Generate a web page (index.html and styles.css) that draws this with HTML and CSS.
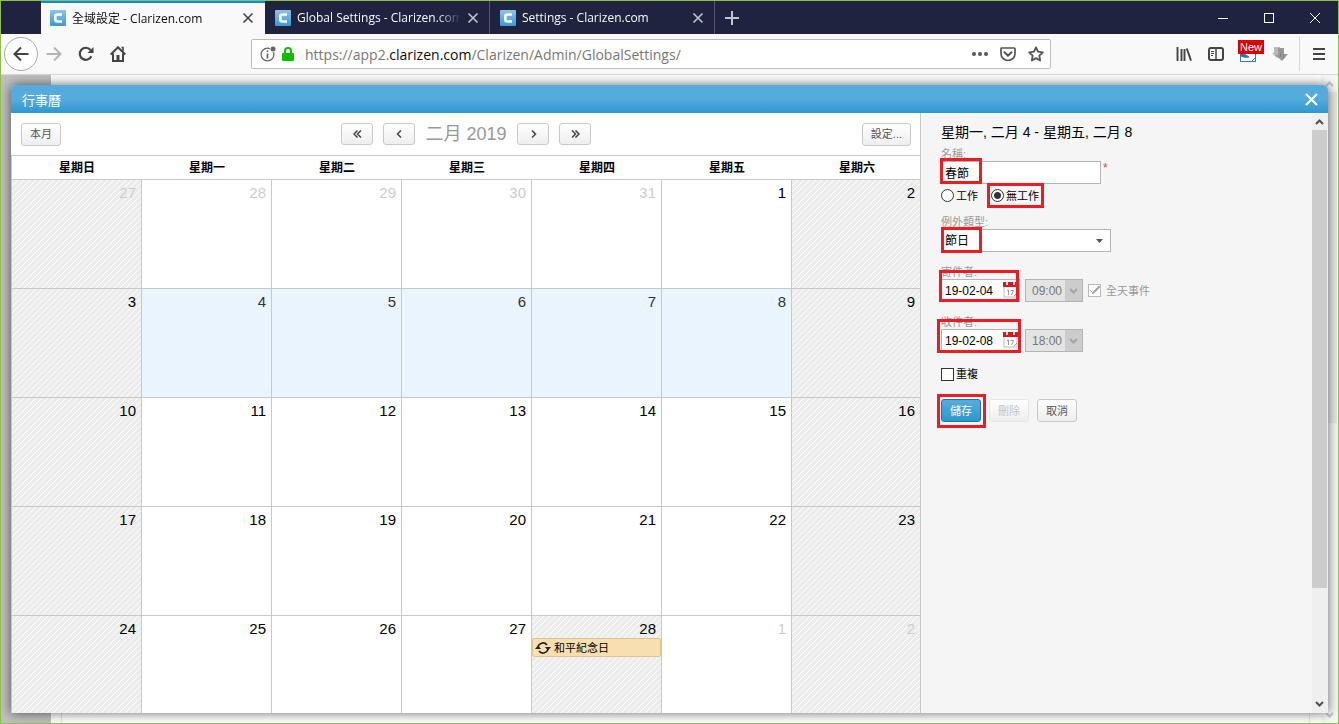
FILE: index.html
```
<!DOCTYPE html>
<html lang="zh-Hant">
<head>
    <meta charset="UTF-8">
    <meta name="viewport" content="width=device-width, initial-scale=1.0">
    <title>全域設定 - Clarizen.com</title>
    <link rel="stylesheet" href="styles.css">
</head>
<body>

<svg width="0" height="0" class="defs" aria-hidden="true">
    <linearGradient id="logo-bg" x1="0" y1="0" x2="0" y2="1">
        <stop offset="0" stop-color="#8cc3e8"/>
        <stop offset="1" stop-color="#3a9bd4"/>
    </linearGradient>
    <symbol id="logo" viewBox="0 0 16 16">
        <rect width="16" height="16" rx="1" fill="url(#logo-bg)"/>
        <path d="M12 4.500H7.500Q5.300 4.500 5.300 6.500V9.500Q5.300 11.500 7.500 11.500H12" fill="none" stroke="#fff" stroke-width="2.600"/>
    </symbol>
    <symbol id="cross" viewBox="0 0 12 12">
        <path d="M1.500 1.500l9 9M10.500 1.500l-9 9" fill="none" stroke="currentColor" stroke-width="1.600"/>
    </symbol>
    <symbol id="chev-up" viewBox="0 0 9 6">
        <path d="M1 5l3.500-3.500L8 5" fill="none" stroke="currentColor" stroke-width="2"/>
    </symbol>
    <symbol id="chev-down" viewBox="0 0 9 6">
        <path d="M1 1l3.500 3.500L8 1" fill="none" stroke="currentColor" stroke-width="2"/>
    </symbol>
    <symbol id="datepick" viewBox="0 0 15 16">
        <rect x="1" y="4" width="13" height="11" fill="#fff" stroke="#bbb"/>
        <path d="M0 0h15v5H0z" fill="#d01c1f"/>
        <path d="M3 0h2v3H3zM10 0h2v3h-2z" fill="#f3d6d6"/>
        <path d="M4 8.500l1.500-.5v5M7.500 8.500h3l-2 4.500M11 14l3-3" fill="none" stroke="#999"/>
    </symbol>
</svg>

<div class="window">
    <header class="tabbar">
        <div class="tab active">
            <svg class="favicon"><use href="#logo"/></svg>
            <span class="tab-title">全域設定 - Clarizen.com</span>
            <button type="button" class="tab-close" aria-label="Close tab"><svg><use href="#cross"/></svg></button>
        </div>
        <div class="tab">
            <svg class="favicon"><use href="#logo"/></svg>
            <span class="tab-title">Global Settings - Clarizen.com</span>
            <button type="button" class="tab-close" aria-label="Close tab"><svg><use href="#cross"/></svg></button>
        </div>
        <div class="tab">
            <svg class="favicon"><use href="#logo"/></svg>
            <span class="tab-title">Settings - Clarizen.com</span>
            <button type="button" class="tab-close" aria-label="Close tab"><svg><use href="#cross"/></svg></button>
        </div>
        <button type="button" class="tab-new" aria-label="New tab">
            <svg width="14" height="14" viewBox="0 0 14 14"><path d="M7 0v14M0 7h14" stroke="currentColor" stroke-width="2"/></svg>
        </button>
        <div class="window-buttons">
            <button type="button" aria-label="Minimize"><svg width="10" height="10" viewBox="0 0 10 10"><path d="M0 5.500h10" stroke="#fff"/></svg></button>
            <button type="button" aria-label="Maximize"><svg width="10" height="10" viewBox="0 0 10 10"><rect x=".5" y=".5" width="9" height="9" fill="none" stroke="#fff"/></svg></button>
            <button type="button" aria-label="Close"><svg width="10" height="10" viewBox="0 0 10 10"><path d="M0 0l10 10M10 0L0 10" stroke="#fff"/></svg></button>
        </div>
    </header>

    <nav class="navbar">
        <button type="button" class="nav-back" aria-label="Back">
            <svg width="16" height="16" viewBox="0 0 16 16"><path d="M15.500 8H2M8 1.500L1.500 8 8 14.500" fill="none" stroke="#444" stroke-width="2"/></svg>
        </button>
        <button type="button" class="nav-icon" aria-label="Forward">
            <svg width="16" height="16" viewBox="0 0 16 16"><path d="M.5 8H14M8 1.500L14.500 8 8 14.500" fill="none" stroke="#b4b4b5" stroke-width="2"/></svg>
        </button>
        <button type="button" class="nav-icon" aria-label="Reload">
            <svg width="16" height="16" viewBox="0 0 16 16"><path d="M13.300 10.200A6 6 0 1 1 12.500 4" fill="none" stroke="#444" stroke-width="2.200"/><path d="M15.500 1v6h-6z" fill="#444"/></svg>
        </button>
        <button type="button" class="nav-icon" aria-label="Home">
            <svg width="16" height="16" viewBox="0 0 16 16"><path d="M.7 8.500L8 1.300l7.300 7.200M3 7.500V15h10V7.500" fill="none" stroke="#444" stroke-width="2"/><path d="M6.500 9h3v6h-3z" fill="#444"/><path d="M11.500 1.500H13V5" fill="none" stroke="#444" stroke-width="1.500"/></svg>
        </button>

        <div class="urlbar">
            <svg width="16" height="16" viewBox="0 0 16 16"><circle cx="7.500" cy="8.500" r="6.400" fill="none" stroke="#666" stroke-width="1.300"/><path d="M7.500 7.500v5M7.500 4.500v1.600" stroke="#666" stroke-width="1.700"/><circle cx="13" cy="3" r="3.200" fill="#fff"/><circle cx="13" cy="3" r="2.500" fill="#666"/></svg>
            <svg width="12" height="14" viewBox="0 0 12 14"><path d="M3 7V4a3 3 0 0 1 6 0v3" fill="none" stroke="#12bc00" stroke-width="2"/><rect y="6" width="12" height="8" rx="1" fill="#12bc00"/></svg>
            <div class="url">https://app2.<b>clarizen.com</b>/Clarizen/Admin/GlobalSettings/</div>
            <button type="button" class="url-icon" aria-label="Page actions">
                <svg width="16" height="16" viewBox="0 0 16 16"><g fill="#555"><circle cx="2" cy="8" r="2"/><circle cx="8" cy="8" r="2"/><circle cx="14" cy="8" r="2"/></g></svg>
            </button>
            <button type="button" class="url-icon" aria-label="Save to Pocket">
                <svg width="16" height="16" viewBox="0 0 16 16"><path d="M1.900 2h12.200q.9 0 .9.900V7.500a7 7 0 0 1-14 0V2.900Q1 2 1.900 2z" fill="none" stroke="#555" stroke-width="1.700"/><path d="M4.500 6.200L8 9.600l3.500-3.400" fill="none" stroke="#555" stroke-width="2" stroke-linecap="round"/></svg>
            </button>
            <button type="button" class="url-icon" aria-label="Bookmark this page">
                <svg width="16" height="16" viewBox="0 0 16 16"><path d="M8 1.300l2 4.400 4.800.6-3.500 3.300.9 4.900L8 12.100l-4.200 2.400.9-4.900L1.200 6.300 6 5.700z" fill="none" stroke="#555" stroke-width="1.800" stroke-linejoin="round"/></svg>
            </button>
        </div>

        <button type="button" class="nav-icon" aria-label="Library">
            <svg width="16" height="16" viewBox="0 0 16 16"><path d="M1.500 1v14M5.500 3v12M8.500 3v12M10.800 2.500L15 14.600" fill="none" stroke="#444" stroke-width="1.900"/></svg>
        </button>
        <button type="button" class="nav-icon" aria-label="Sidebars">
            <svg width="16" height="16" viewBox="0 0 16 16"><rect x="1" y="2" width="14" height="12" rx="2" fill="none" stroke="#444" stroke-width="2"/><path d="M8 2v12" stroke="#444" stroke-width="1.500"/><path d="M3 5.500h3M3 7.500h3M3 9.500h2" stroke="#444"/></svg>
        </button>
        <button type="button" class="nav-icon" aria-label="Extension">
            <svg width="16" height="16" viewBox="0 0 16 16"><rect x=".5" y=".5" width="15" height="15" fill="#fff" stroke="#3b7cb8"/><path d="M1 8q5 0 8 3-5 1-8-1zM12 15l3-3" fill="#2d72b4" stroke="#2d72b4"/></svg>
            <span class="new-badge">New</span>
        </button>
        <button type="button" class="nav-icon" aria-label="Downloads">
            <svg width="16" height="16" viewBox="0 0 16 16"><path d="M2 1h6v6h2l-5 5-5-5h2z" fill="#b8b8b8"/><path d="M6 2h6v6h4l-6 7-7-6h3z" fill="#989898"/><path d="M8.500 6v5M11.500 8v5" stroke="#808080"/></svg>
        </button>
        <div class="nav-separator"></div>
        <button type="button" class="nav-icon" aria-label="Menu">
            <svg width="12" height="14" viewBox="0 0 12 14"><path d="M0 2h12M0 7h12M0 12h12" stroke="#444" stroke-width="2"/></svg>
        </button>
    </nav>

    <div class="page">
        <div class="page-side"></div>
        <div class="page-main"></div>
        <div class="page-scroll">
            <svg><use href="#chev-up"/></svg>
            <div class="page-thumb"></div>
            <svg><use href="#chev-down"/></svg>
        </div>

        <section class="dialog" role="dialog" aria-labelledby="dialog-title">
            <div class="dialog-head">
                <span id="dialog-title">行事曆</span>
                <button type="button" class="dialog-close" aria-label="Close">
                    <svg width="13" height="13" viewBox="0 0 13 13"><path d="M1 1l11 11M12 1L1 12" stroke="#fff" stroke-width="2"/></svg>
                </button>
            </div>
            <div class="dialog-body">
                <div class="calendar">
                    <div class="calendar-bar">
                        <button type="button" class="btn">本月</button>
                        <div class="month-nav">
                            <button type="button" class="btn btn-nav" aria-label="Previous year"><svg width="9" height="8" viewBox="0 0 9 8"><path d="M4.500.5L1 4l3.500 3.500M8 .5L4.500 4 8 7.500"/></svg></button>
                            <button type="button" class="btn btn-nav" aria-label="Previous month"><svg width="9" height="8" viewBox="0 0 9 8"><path d="M6 .5L2.500 4 6 7.500"/></svg></button>
                            <span class="month">二月 2019</span>
                            <button type="button" class="btn btn-nav" aria-label="Next month"><svg width="9" height="8" viewBox="0 0 9 8"><path d="M3 .5L6.500 4 3 7.500"/></svg></button>
                            <button type="button" class="btn btn-nav" aria-label="Next year"><svg width="9" height="8" viewBox="0 0 9 8"><path d="M1 .5L4.500 4 1 7.500M4.500.5L8 4 4.500 7.500"/></svg></button>
                        </div>
                        <button type="button" class="btn btn-settings">設定...</button>
                    </div>
                    <table class="month-table">
                        <thead>
                            <tr><th>星期日</th><th>星期一</th><th>星期二</th><th>星期三</th><th>星期四</th><th>星期五</th><th>星期六</th></tr>
                        </thead>
                        <tbody>
                            <tr>
                                <td class="off other">27</td>
                                <td class="other">28</td>
                                <td class="other">29</td>
                                <td class="other">30</td>
                                <td class="other">31</td>
                                <td>1</td>
                                <td class="off">2</td>
                            </tr>
                            <tr>
                                <td class="off">3</td>
                                <td class="selected">4</td>
                                <td class="selected">5</td>
                                <td class="selected">6</td>
                                <td class="selected">7</td>
                                <td class="selected">8</td>
                                <td class="off">9</td>
                            </tr>
                            <tr>
                                <td class="off">10</td>
                                <td>11</td>
                                <td>12</td>
                                <td>13</td>
                                <td>14</td>
                                <td>15</td>
                                <td class="off">16</td>
                            </tr>
                            <tr>
                                <td class="off">17</td>
                                <td>18</td>
                                <td>19</td>
                                <td>20</td>
                                <td>21</td>
                                <td>22</td>
                                <td class="off">23</td>
                            </tr>
                            <tr>
                                <td class="off">24</td>
                                <td>25</td>
                                <td>26</td>
                                <td>27</td>
                                <td class="off">28
                                    <div class="event">
                                        <svg width="16" height="14" viewBox="0 0 16 14"><path d="M3 6.500a5 5 0 0 1 9-2.500M13 7.500a5 5 0 0 1-9 2.500" fill="none" stroke="#222" stroke-width="1.600"/><path d="M0 8l3-3.500L6 8zM10 6l3 3.500L16 6z" fill="#222"/></svg>
                                        和平紀念日
                                    </div>
                                </td>
                                <td class="other">1</td>
                                <td class="off other">2</td>
                            </tr>
                        </tbody>
                    </table>
                </div>

                <form class="panel">
                    <h2>星期一, 二月 4 - 星期五, 二月 8</h2>

                    <label class="caption" for="name">名稱:</label>
                    <div class="row">
                        <div class="mark mark-name"><input type="text" id="name" class="text" value="春節"></div>
                        <span class="required">*</span>
                    </div>

                    <div class="row row-radio">
                        <label class="choice"><input type="radio" name="work">工作</label>
                        <label class="choice mark mark-radio"><input type="radio" name="work" checked>無工作</label>
                    </div>

                    <label class="caption" for="type">例外類型:</label>
                    <div class="row">
                        <div class="mark mark-type">
                            <select id="type" class="text"><option>節日</option></select>
                            <svg class="caret" width="7" height="4" viewBox="0 0 7 4"><path d="M0 0h7L3.500 4z" fill="#555"/></svg>
                        </div>
                    </div>

                    <label class="caption caption-date" for="from">寄件者:</label>
                    <div class="row">
                        <div class="mark mark-from">
                            <input type="text" id="from" class="text date" value="19-02-04">
                            <svg class="date-icon"><use href="#datepick"/></svg>
                        </div>
                        <div class="time">
                            <select aria-label="09:00" disabled><option>09:00</option></select>
                            <span class="time-arrow"><svg><use href="#chev-down"/></svg></span>
                        </div>
                        <label class="choice all-day"><input type="checkbox" checked disabled>全天事件</label>
                    </div>

                    <label class="caption caption-date" for="to">收件者:</label>
                    <div class="row">
                        <div class="mark mark-to">
                            <input type="text" id="to" class="text date" value="19-02-08">
                            <svg class="date-icon"><use href="#datepick"/></svg>
                        </div>
                        <div class="time">
                            <select aria-label="18:00" disabled><option>18:00</option></select>
                            <span class="time-arrow"><svg><use href="#chev-down"/></svg></span>
                        </div>
                    </div>

                    <label class="choice repeat"><input type="checkbox">重複</label>

                    <div class="actions">
                        <div class="mark mark-save"><button type="button" class="btn btn-primary">儲存</button></div>
                        <button type="button" class="btn" disabled>刪除</button>
                        <button type="button" class="btn">取消</button>
                    </div>
                </form>

                <div class="scrollbar">
                    <svg><use href="#chev-up"/></svg>
                    <div class="track"><div class="thumb"></div></div>
                    <svg><use href="#chev-down"/></svg>
                </div>
            </div>
        </section>
    </div>
</div>

</body>
</html>
```
FILE: styles.css
```
* {
    box-sizing: border-box;
}
body {
    margin: 0;
    font-family: "Liberation Sans", "Noto Sans CJK TC", sans-serif;
    font-size: 11px;
    color: #000;
}
button, input, select {
    font-family: inherit;
    margin: 0;
}
button {
    padding: 0;
    border: none;
    background: none;
}
.defs {
    position: absolute;
}
.window {
    display: flex;
    flex-direction: column;
    height: 100vh;
    border: 1px solid #8cc04b;
    overflow: hidden;
}

/* tabs */
.tabbar {
    display: flex;
    height: 33px;
    padding-left: 40px;
    background: #202340;
    font-family: "Open Sans", "Noto Sans CJK TC", sans-serif;
    font-size: 12px;
    color: #f9f9fa;
}
.tab {
    display: flex;
    align-items: center;
    width: 225px;
    padding: 0 4px 0 10px;
    border-right: 1px solid #55576c;
}
.tab.active {
    width: 224px;
    padding: 0 5px 0 9px;
    background: #f9f9fa;
    box-shadow: inset 0 2px #0a84ff;
    color: #0c0c0d;
    border-right: none;
}
.favicon {
    width: 16px;
    height: 16px;
    flex: none;
}
.tab-title {
    flex: 1;
    margin-left: 6px;
    overflow: hidden;
    white-space: nowrap;
    -webkit-mask-image: linear-gradient(to left, transparent, #000 24px);
    mask-image: linear-gradient(to left, transparent, #000 24px);
}
.tab-close {
    display: flex;
    align-items: center;
    justify-content: center;
    width: 24px;
    height: 24px;
    color: #c4c4cc;
}
.active .tab-close {
    color: #444;
}
.tab-close svg {
    width: 12px;
    height: 12px;
}
.tab-new {
    width: 34px;
    color: #c4c4cc;
}
.tab-new svg {
    display: block;
    margin: auto;
}
.window-buttons {
    display: flex;
    margin-left: auto;
}
.window-buttons button {
    width: 46px;
}

/* toolbar */
.navbar {
    display: flex;
    align-items: center;
    height: 41px;
    padding: 0 3px;
    background: #f9f9fa;
    border-bottom: 1px solid #d8d8d8;
}
.navbar button {
    display: flex;
    align-items: center;
    justify-content: center;
    flex: none;
}
.nav-back {
    width: 34px;
    height: 34px;
    border: 1px solid #aaa;
    border-radius: 50%;
    background: #fff;
}
.nav-icon {
    position: relative;
    width: 32px;
    height: 32px;
}
.urlbar {
    display: flex;
    align-items: center;
    gap: 6px;
    flex: 1;
    height: 30px;
    margin: 0 117px;
    padding: 0 0 0 8px;
    border: 1px solid #bcbcbc;
    border-radius: 2px;
    background: #fff;
}
.url {
    flex: 1;
    margin-left: 5px;
    font-family: "Open Sans", sans-serif;
    font-size: 14px;
    color: #777;
    white-space: nowrap;
    overflow: hidden;
}
.url b {
    font-weight: normal;
    color: #0c0c0d;
}
.url-icon {
    width: 28px;
    height: 28px;
    margin-left: -6px;
}
.new-badge {
    position: absolute;
    top: 2px;
    left: 6px;
    width: 26px;
    height: 14px;
    background: #d80000;
    color: #fff;
    font-size: 11px;
    line-height: 14px;
    text-align: center;
}
.nav-separator {
    width: 1px;
    height: 34px;
    margin: 0 3px;
    background: #d8d8d8;
}

/* page behind the dialog */
.page {
    position: relative;
    display: flex;
    flex: 1;
    min-height: 0;
    background: #fff;
}
.page-side {
    width: 50px;
    background: #c0c0c0;
}
.page-main {
    flex: 1;
    margin: 20px 11px 0 10px;
    border: solid #e4e4e4;
    border-width: 0 1px;
}
.page-scroll {
    display: flex;
    flex-direction: column;
    align-items: center;
    width: 17px;
    padding: 6px 0 5px;
    background: #f7f7f7;
    color: #c4c4c4;
}
.page-scroll svg {
    flex: none;
    width: 9px;
    height: 6px;
}
.page-thumb {
    width: 15px;
    height: 52%;
    margin: 5px 0 auto;
    background: #e8e8e8;
}

/* dialog */
.dialog {
    position: absolute;
    top: 10px;
    right: 10px;
    bottom: 10px;
    left: 10px;
    display: flex;
    flex-direction: column;
    border-radius: 5px 5px 0 0;
    box-shadow: 0 0 12px rgba(0, 0, 0, 0.6);
    background: #f5f5f5;
}
.dialog-head {
    display: flex;
    align-items: center;
    justify-content: space-between;
    height: 28px;
    padding: 0 10px 0 11px;
    border-radius: 5px 5px 0 0;
    background: linear-gradient(#56abdd 50%, #2b98d0);
    color: #fff;
    font-size: 13px;
}
.dialog-close svg {
    display: block;
}
.dialog-body {
    display: flex;
    flex: 1;
    min-height: 0;
}
.btn {
    min-width: 40px;
    height: 23px;
    padding: 0 8px;
    border: 1px solid #c8c8c8;
    border-radius: 3px;
    background: linear-gradient(#fff, #eee);
    color: #555;
    font-size: 11px;
    line-height: 20px;
}
.btn:disabled {
    border-color: #e6e6e6;
    color: #c4c4c4;
}
.btn-primary {
    border-color: #1c76a8;
    background: linear-gradient(#56abdd, #2b98d0);
    color: #fff;
}

/* calendar */
.calendar {
    flex: 1;
    min-width: 0;
    overflow: hidden;
    background: #fff;
    border-right: 1px solid #c8c8c8;
}
.calendar-bar {
    display: grid;
    grid-template-columns: 1fr auto 1fr;
    align-items: center;
    justify-items: start;
    height: 42px;
    padding: 0 9px 0 10px;
}
.month-nav {
    display: flex;
    align-items: center;
    gap: 10px;
}
.btn-nav {
    min-width: 32px;
    height: 22px;
}
.btn-nav svg {
    display: block;
    margin: auto;
    fill: none;
    stroke: #444;
    stroke-width: 1.5px;
}
.month {
    width: 82px;
    color: #999;
    font-size: 18px;
    line-height: 24px;
    text-align: center;
    white-space: nowrap;
}
.btn-settings {
    justify-self: end;
}
.month-table {
    width: calc(100% + 2px);
    table-layout: fixed;
    border-spacing: 0;
    border-top: 1px solid #c8c8c8;
    border-left: 1px solid #c8c8c8;
}
.month-table th {
    height: 24px;
    padding: 0;
    border-bottom: 1px solid #c8c8c8;
    font-size: 12px;
    line-height: 16px;
}
.month-table td {
    height: 109px;
    padding: 4px 5px 0 0;
    border-right: 1px solid #c8c8c8;
    border-bottom: 1px solid #c8c8c8;
    font-size: 15px;
    line-height: 18px;
    text-align: right;
    vertical-align: top;
}
.month-table td:last-child {
    padding-right: 7px;
    border-right: none;
}
.month-table .off {
    background: linear-gradient(135deg, #ececec 43%, #fff 46%, #fff 54%, #ececec 57%) 0 0 / 6px 6px;
}
.month-table .other {
    color: #ccc;
}
.month-table .selected {
    background: #e9f4ff;
    color: #333;
}
.event {
    display: flex;
    align-items: center;
    gap: 3px;
    height: 19px;
    margin-right: -5px;
    padding-left: 2px;
    border: 1px solid #dfc48f;
    border-radius: 2px;
    background: #f8dfb0;
    font-size: 11px;
}

/* side panel */
.panel {
    width: 391px;
    padding: 9px 20px;
    background: #f5f5f5;
}
.panel h2 {
    margin: 0 0 6px;
    font-size: 14px;
    font-weight: normal;
    line-height: 20px;
}
.caption {
    display: block;
    height: 13px;
    color: #999;
    font-size: 11px;
    line-height: 13px;
}
.row {
    display: flex;
    align-items: center;
    height: 23px;
}
.text {
    display: block;
    width: 160px;
    height: 23px;
    padding: 0 3px;
    border: 1px solid #b4b4b4;
    border-radius: 0;
    background: #fff;
    color: #000;
    font-size: 12px;
}
select.text {
    width: 170px;
    appearance: none;
}
.caret {
    position: absolute;
    top: 10px;
    right: 8px;
}
.required {
    align-self: flex-start;
    margin-left: 2px;
    color: #e04040;
    font-size: 12px;
    line-height: 14px;
}
.choice {
    display: flex;
    align-items: center;
    gap: 2px;
    font-size: 11px;
    line-height: 16px;
}
.choice input {
    appearance: none;
    width: 13px;
    height: 13px;
    border: 1px solid #333;
    background: #fff;
}
.choice input[type="radio"] {
    border-radius: 50%;
}
.choice input[type="radio"]:checked {
    background: radial-gradient(circle, #333 3px, #fff 4px);
}
.row-radio {
    gap: 13px;
    margin-bottom: 9px;
}
.caption-date {
    margin-top: 14px;
}
.date {
    width: 79px;
}
.date-icon {
    position: absolute;
    top: 3px;
    right: 2px;
    width: 15px;
    height: 16px;
}
.time {
    display: flex;
    width: 58px;
    height: 23px;
    margin-left: 5px;
    border: 1px solid #b4b4b4;
    background: #e4e4e4;
}
.time select {
    appearance: none;
    width: 39px;
    padding: 0 0 0 6px;
    border: none;
    border-radius: 0;
    background: none;
    color: #777;
    font-size: 12px;
    opacity: 1;
}
.time-arrow {
    display: flex;
    align-items: center;
    justify-content: center;
    flex: 1;
    background: #ccc;
    color: #a4a4a4;
}
.time-arrow svg {
    width: 9px;
    height: 6px;
}
.all-day {
    gap: 5px;
    margin-left: 5px;
    color: #999;
}
.choice.all-day input {
    border-color: #bbb;
    background:
        linear-gradient(45deg, transparent 45%, #aaa 45%, #aaa 60%, transparent 60%) 1px 5px / 4px 4px no-repeat,
        linear-gradient(135deg, transparent 43%, #aaa 43%, #aaa 57%, transparent 57%) 3px 1px / 8px 8px no-repeat,
        #fff;
}
.repeat {
    width: 60px;
    margin-top: 14px;
}
.actions {
    display: flex;
    gap: 8px;
    margin-top: 17px;
}

/* red frames drawn round the fields to fill in */
.mark {
    position: relative;
}
.mark::after {
    content: "";
    position: absolute;
    border: 3px solid #ed1c24;
    pointer-events: none;
}
.mark-name::after {
    inset: -3px 119px 0 -1px;
}
.mark-radio::after {
    inset: -5px -5px -4px -4px;
}
.mark-type::after {
    inset: -2px 129px -1px 0;
}
.mark-from::after {
    inset: -9px 1px 0 -2px;
}
.mark-to::after {
    inset: -10px -1px -1px -4px;
}
.mark-save::after {
    inset: -5px -5px -6px -4px;
}

/* dialog scrollbar */
.scrollbar {
    display: flex;
    flex-direction: column;
    align-items: center;
    width: 16px;
    padding: 6px 1px 6px 0;
    background: #efefef;
    color: #505050;
}
.scrollbar svg {
    flex: none;
    width: 9px;
    height: 6px;
}
.track {
    flex: 1;
    width: 100%;
    margin: 5px 0;
}
.thumb {
    height: 81%;
    background: #ccc;
}
```
